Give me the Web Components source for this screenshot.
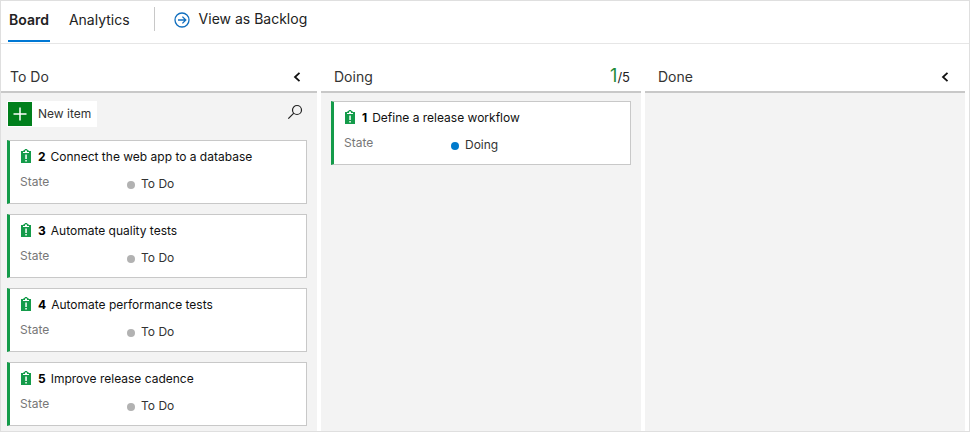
<!DOCTYPE html>
<html lang="en">
<head>
<meta charset="utf-8">
<meta name="viewport" content="width=device-width, initial-scale=1">
<title>Board</title>
<style>
  html, body { height: 100%; margin: 0; }
  body { font: 12px/16px Inter, "Liberation Sans", sans-serif; color: #333; background: #fff; }
</style>
</head>
<body>
<board-app>
  <board-tabs slot="tabs"></board-tabs>
  <board-column name="To Do" collapsible addable>
    <work-item number="2" name="Connect the web app to a database" state="To Do"></work-item>
    <work-item number="3" name="Automate quality tests" state="To Do"></work-item>
    <work-item number="4" name="Automate performance tests" state="To Do"></work-item>
    <work-item number="5" name="Improve release cadence" state="To Do"></work-item>
  </board-column>
  <board-column name="Doing" count="1" limit="5">
    <work-item number="1" name="Define a release workflow" state="Doing"></work-item>
  </board-column>
  <board-column name="Done" collapsible></board-column>
</board-app>
<script>
const attach = (host, html) => { host.attachShadow({ mode: "open" }).innerHTML = html; };

customElements.define("board-app", class extends HTMLElement {
  constructor() {
    super();
    attach(this, `
      <style>
        :host { display: flex; flex-direction: column; box-sizing: border-box; height: 100%; border: 1px solid #dfdfdf; overflow: hidden; }
        main { flex: 1; min-height: 0; display: grid; grid-template-columns: 316fr 320fr 320fr; gap: 4px; padding-right: 4px; }
      </style>
      <slot name="tabs"></slot>
      <main><slot></slot></main>`);
  }
});

customElements.define("board-tabs", class extends HTMLElement {
  constructor() {
    super();
    attach(this, `
      <style>
        :host { display: block; border-bottom: 1px solid #e6e6e6; }
        nav { display: flex; height: 42px; padding-left: 7px; font-size: 14px; line-height: 20px; }
        a { box-sizing: border-box; color: #222; text-decoration: none; white-space: nowrap; padding: 9px 1px 0; height: 41px; }
        a[aria-current] { font-weight: 600; border-bottom: 2px solid #0078d4; }
        a + a { margin-left: 18px; }
        hr { width: 1px; height: 24px; margin: 6px 19px 0 23px; border: 0; background: #c8c8c8; }
        .link { display: flex; gap: 9px; padding: 8px 0 0; }
        svg { width: 16px; height: 16px; margin-top: 3px; fill: none; stroke: #106ebe; stroke-width: 1.3; }
      </style>
      <nav>
        <a href="#board" aria-current="page">Board</a>
        <a href="#analytics">Analytics</a>
        <hr>
        <a class="link" href="#backlog">
          <svg viewBox="0 0 16 16" aria-hidden="true"><circle cx="8" cy="8" r="7"/><path d="M4 8h7.6M8.4 4.6 11.8 8l-3.4 3.4"/></svg>
          View as Backlog
        </a>
      </nav>`);
  }
});

customElements.define("board-column", class extends HTMLElement {
  connectedCallback() {
    if (this.shadowRoot) return;
    const has = n => this.hasAttribute(n), get = n => this.getAttribute(n);
    attach(this, `
      <style>
        :host { display: flex; flex-direction: column; min-width: 0; min-height: 0; background: #f3f3f3; }
        header { flex: none; display: flex; justify-content: space-between; align-items: center; box-sizing: border-box; height: 49px;
          padding: 18px 11px 0 13px; background: #fff; border-bottom: 2px solid #c8c8c8; }
        :host([addable]) header { padding-left: 9px; }
        h2 { margin: 0; font-size: 14px; line-height: 20px; font-weight: 400; color: #333; }
        button { font: inherit; color: inherit; border: 0; padding: 0; background: none; display: flex; align-items: center; }
        .fold { width: 16px; height: 16px; justify-content: center; margin-right: 1px; }
        .fold svg { width: 8px; height: 10px; fill: none; stroke: #111; stroke-width: 1.8; }
        .limit { color: #222; font-size: 13px; line-height: 20px; }
        .limit b { font-size: 18px; font-weight: 400; color: #1e8a36; }
        .tools { display: flex; justify-content: space-between; margin-bottom: 3px; }
        .add { height: 26px; background: #fff; padding: 0 6px 0 1px; gap: 6px; color: #333; }
        .add svg { width: 24px; height: 24px; background: #007f1c; stroke: #fff; stroke-width: 1.5; }
        .find { width: 16px; height: 22px; margin-right: 4px; }
        .find svg { width: 16px; height: 16px; fill: none; stroke: #222; stroke-width: 1.2; }
        .body { display: flex; flex-direction: column; gap: 10px; padding: 8px 10px 5px; }
        :host([addable]) .body { padding-left: 6px; }
      </style>
      <header>
        <h2>${get("name")}</h2>
        ${has("collapsible") ? `<button class="fold" aria-label="Collapse ${get("name")}"><svg viewBox="0 0 8 10"><path d="M6.5.8 2 5l4.5 4.2"/></svg></button>` : ""}
        ${has("limit") ? `<span class="limit"><b>${get("count")}</b>/${get("limit")}</span>` : ""}
      </header>
      <div class="body">
        ${has("addable") ? `<div class="tools">
          <button class="add"><svg viewBox="0 0 24 24" aria-hidden="true"><path d="M12 5.5v13M5.5 12h13"/></svg>New item</button>
          <button class="find" aria-label="Search"><svg viewBox="0 0 16 16"><circle cx="10" cy="6" r="4.5"/><path d="M6.8 9.2 1.3 14.7"/></svg></button>
        </div>` : ""}
        <slot></slot>
      </div>`);
  }
});

customElements.define("work-item", class extends HTMLElement {
  connectedCallback() {
    if (this.shadowRoot) return;
    const get = n => this.getAttribute(n);
    attach(this, `
      <style>
        :host { display: block; box-sizing: border-box; height: 64px; flex: none; background: #fff;
          border: 1px solid #c8c8c8; border-left: 3px solid #149b4a; padding: 8px 10px 0; }
        h3 { display: flex; margin: 0; font-size: 12px; line-height: 16px; font-weight: 400; color: #111; white-space: nowrap; }
        h3 svg { width: 12px; height: 16px; margin-right: 6px; }
        h3 b { font-weight: 700; color: #000; margin-right: 5px; }
        dl { display: grid; grid-template-columns: 107px 1fr; margin: 9px 0 0; }
        dt { color: #777; }
        dd { display: flex; align-items: center; gap: 6px; margin: 2px 0 0; color: #333; }
        i { width: 8px; height: 8px; margin-top: 2px; border-radius: 50%; background: #b2b2b2; }
        :host([state="Doing"]) i { background: #007acc; }
      </style>
      <h3>
        <svg viewBox="0 1 12 16" aria-hidden="true">
          <path fill="#149b4a" d="M1 3h2.5V2h1L5 1h2l.5 1h1v1H11v12H1z"/>
          <path fill="#fff" d="M3 4h2V2.4h2V4h2v1H3zM5.3 6.5h1.5V11H5.3zM5.3 12h1.5v1.6H5.3z"/>
        </svg>
        <b>${get("number")}</b>${get("name")}
      </h3>
      <dl><dt>State</dt><dd><i></i>${get("state")}</dd></dl>`);
  }
});
</script>
</body>
</html>
